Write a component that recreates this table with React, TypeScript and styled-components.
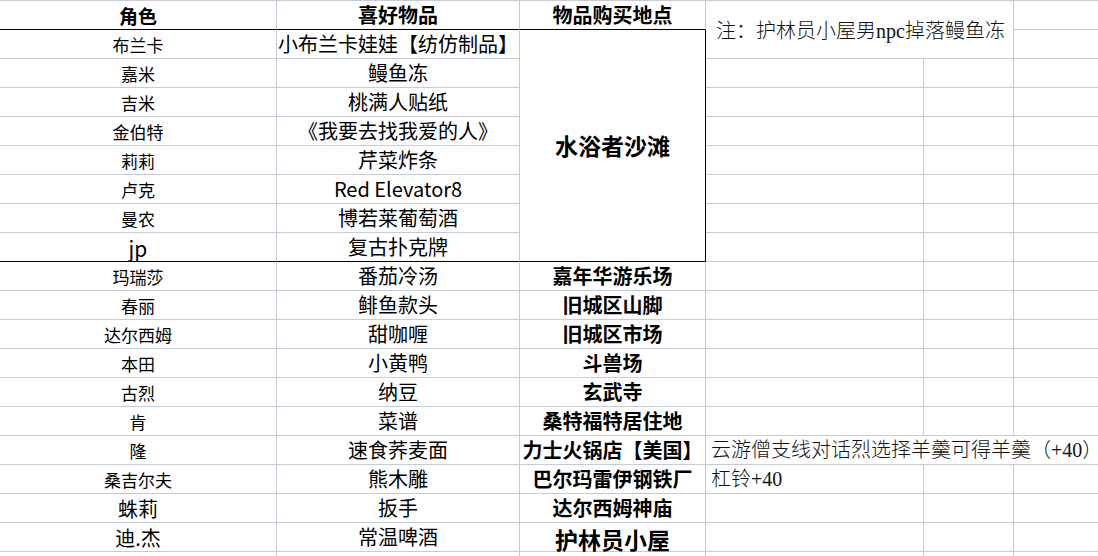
import React from "react";
import styled, { createGlobalStyle, css } from "styled-components";

const GRID = "#c7cbd8";

const Global = createGlobalStyle`
  html, body {
    margin: 0;
    padding: 0;
    background: #ffffff;
    overflow: hidden;
  }
  body {
    font-family: "Noto Sans CJK SC", "Noto Sans", sans-serif;
    color: #000;
  }
`;

const Sheet = styled.div`
  display: grid;
  grid-template-columns: 277px 243px 186px 218px 90px 1fr;
  grid-auto-rows: 29px;
  width: 1098px;
  border-top: 1px solid ${GRID};
`;

type CellProps = {
  $size?: number;
  $bold?: boolean;
  $serif?: boolean;
  $left?: boolean;
  $pad?: number;
  $blackBottom?: boolean;
  $blackRight?: boolean;
  $noRight?: boolean;
  $colSpan?: number;
  $rowSpan?: number;
  $shift?: number;
};

const Cell = styled.div<CellProps>`
  box-sizing: border-box;
  display: flex;
  align-items: center;
  justify-content: ${(p) => (p.$left ? "flex-start" : "center")};
  padding-left: ${(p) => (p.$left ? `${p.$pad ?? 5}px` : "0")};
  padding-top: ${(p) => (p.$shift ? `${p.$shift}px` : "0")};
  border-right: 1px solid ${(p) => (p.$blackRight ? "#000" : GRID)};
  border-bottom: 1px solid ${(p) => (p.$blackBottom ? "#000" : GRID)};
  ${(p) => p.$noRight && css`border-right: none;`}
  font-size: ${(p) => p.$size ?? 17}px;
  font-weight: ${(p) => (p.$bold ? 700 : 400)};
  line-height: 1;
  white-space: nowrap;
  overflow: visible;
  position: relative;
  z-index: ${(p) => (p.$left ? 1 : 0)};
  ${(p) =>
    p.$serif &&
    css`
      font-family: "Liberation Serif", "Noto Sans CJK SC", serif;
      font-weight: 300;
      color: #111;
    `}
  ${(p) => p.$colSpan && css`grid-column: span ${p.$colSpan};`}
  ${(p) => p.$rowSpan && css`grid-row: span ${p.$rowSpan};`}
`;

type Row = {
  name: string;
  nameSize?: number;
  item: string;
  place?: string;
  placeSize?: number;
  note?: string;
};

const rows: Row[] = [
  { name: "布兰卡", item: "小布兰卡娃娃【纺仿制品】" },
  { name: "嘉米", item: "鳗鱼冻" },
  { name: "吉米", item: "桃满人贴纸" },
  { name: "金伯特", item: "《我要去找我爱的人》" },
  { name: "莉莉", item: "芹菜炸条" },
  { name: "卢克", item: "Red Elevator8" },
  { name: "曼农", item: "博若莱葡萄酒" },
  { name: "jp", nameSize: 21, item: "复古扑克牌" },
  { name: "玛瑞莎", item: "番茄冷汤", place: "嘉年华游乐场" },
  { name: "春丽", item: "鲱鱼款头", place: "旧城区山脚" },
  { name: "达尔西姆", item: "甜咖喱", place: "旧城区市场" },
  { name: "本田", item: "小黄鸭", place: "斗兽场" },
  { name: "古烈", item: "纳豆", place: "玄武寺" },
  { name: "肯", item: "菜谱", place: "桑特福特居住地" },
  {
    name: "隆",
    item: "速食荞麦面",
    place: "力士火锅店【美国】",
    note: "云游僧支线对话烈选择羊羹可得羊羹（+40）",
  },
  { name: "桑吉尔夫", item: "熊木雕", place: "巴尔玛雷伊钢铁厂", note: "杠铃+40" },
  { name: "蛛莉", nameSize: 20, item: "扳手", place: "达尔西姆神庙" },
  { name: "迪.杰", nameSize: 20, item: "常温啤酒", place: "护林员小屋", placeSize: 23 },
];

export default function App() {
  return (
    <>
      <Global />
      <Sheet>
        <Cell $size={19} $bold $blackBottom>
          角色
        </Cell>
        <Cell $size={20} $bold $blackBottom>
          喜好物品
        </Cell>
        <Cell $size={20} $bold $blackBottom>
          物品购买地点
        </Cell>
        <Cell $serif $left $pad={10} $size={20} $shift={3} $colSpan={2} $rowSpan={2}>
          注：护林员小屋男npc掉落鳗鱼冻
        </Cell>
        <Cell $noRight />

        {rows.map((r, i) => {
          const lastBoxed = i === 7;
          return (
            <React.Fragment key={i}>
              <Cell $size={r.nameSize ?? 17} $blackBottom={lastBoxed} $shift={r.nameSize ? 2 : 0}>
                {r.name}
              </Cell>
              <Cell $size={20} $blackBottom={lastBoxed}>
                {r.item}
              </Cell>
              {i === 0 && (
                <Cell $size={23} $bold $rowSpan={8} $blackBottom $blackRight>
                  水浴者沙滩
                </Cell>
              )}
              {i >= 8 && (
                <Cell $size={r.placeSize ?? 20} $bold $shift={r.placeSize ? 4 : 0}>
                  {r.place}
                </Cell>
              )}
              {i === 0 ? (
                <Cell $noRight />
              ) : r.note && r.note.length > 10 ? (
                <Cell $serif $left $size={20} $colSpan={3} $noRight>
                  {r.note}
                </Cell>
              ) : (
                <>
                  <Cell $serif $left $size={20}>
                    {r.note ?? ""}
                  </Cell>
                  <Cell />
                  <Cell $noRight />
                </>
              )}
            </React.Fragment>
          );
        })}
        <Cell />
        <Cell />
        <Cell />
        <Cell />
        <Cell />
        <Cell $noRight />
      </Sheet>
    </>
  );
}
